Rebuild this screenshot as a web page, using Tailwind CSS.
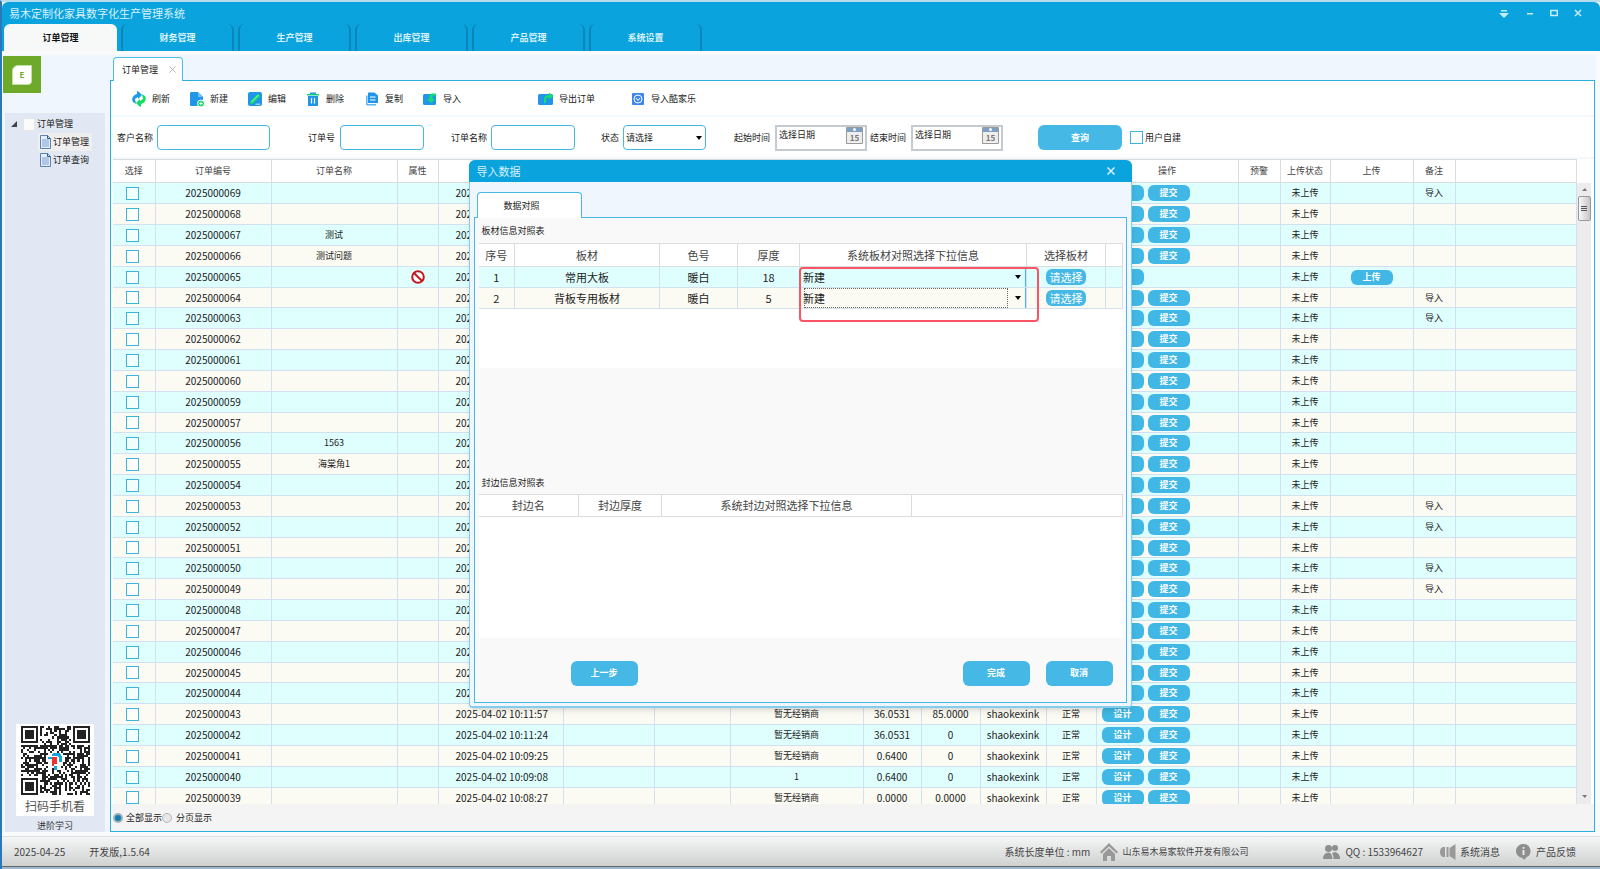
<!DOCTYPE html>
<html lang="zh-CN">
<head>
    <meta charset="UTF-8">
    <meta name="viewport" content="width=device-width, initial-scale=1.0">
    <title>易木定制化家具数字化生产管理系统</title>
    <script src="https://cdn.jsdelivr.net/npm/@tailwindcss/browser@4"></script>
</head>
<body class="flex h-screen flex-col overflow-hidden border-t-2 border-l-2 border-t-[#b9dcec] border-l-[#2a78b8] bg-[#f9fafb] font-['Noto_Sans_CJK_SC',sans-serif] text-[9px] leading-3 text-[#222]">
    <header class="flex h-[49px] shrink-0 flex-col justify-between rounded-t-md bg-[#0aa3dd] pl-[2px]">
        <div class="flex items-center justify-between pt-[3px] pr-[18px]">
            <h1 class="pl-[5px] text-[11px] leading-4 text-[#d9f1fb]">易木定制化家具数字化生产管理系统</h1>
            <div class="flex items-center gap-4 text-[#c8ebf8]">
                <button aria-label="菜单"><svg class="h-3 w-3" viewBox="0 0 12 12" fill="currentColor"><path d="M3 3h6v1.500H3zM1 6h10L6 11z"/></svg></button>
                <button aria-label="最小化"><svg class="h-2 w-2" viewBox="0 0 8 8" fill="currentColor"><path d="M1 4h6v1.500H1z"/></svg></button>
                <button aria-label="最大化"><svg class="h-2 w-2" viewBox="0 0 8 8" fill="none" stroke="currentColor" stroke-width="1.500"><path d="M.8 1.500h6.500v5H.8z"/></svg></button>
                <button aria-label="关闭"><svg class="h-2 w-2" viewBox="0 0 8 8" fill="none" stroke="currentColor" stroke-width="1.500"><path d="M1 1l6 6M7 1L1 7"/></svg></button>
            </div>
        </div>
        <nav class="flex gap-1 text-center font-bold leading-[27px] text-[#d9f1fb]">
            <a href="#" class="h-[27px] w-[113px] rounded-t-md bg-[#f7f9f9] text-[#111]">订单管理</a>
            <a href="#" class="h-[27px] w-[113px] rounded-t-md border-x-2 border-[#0b86b8]">财务管理</a>
            <a href="#" class="h-[27px] w-[113px] rounded-t-md border-x-2 border-[#0b86b8]">生产管理</a>
            <a href="#" class="h-[27px] w-[113px] rounded-t-md border-x-2 border-[#0b86b8]">出库管理</a>
            <a href="#" class="h-[27px] w-[113px] rounded-t-md border-x-2 border-[#0b86b8]">产品管理</a>
            <a href="#" class="h-[27px] w-[113px] rounded-t-md border-x-2 border-[#0b86b8]">系统设置</a>
        </nav>
    </header>

    <div class="mt-1 mr-1 mb-1 flex min-h-0 flex-1 bg-[#eff6fe]">
        <aside class="flex w-[108px] shrink-0 flex-col pr-[5px]">
            <div class="mt-px ml-px flex h-[37px] w-[38px] shrink-0 items-center justify-center bg-[#6fa929]">
                <div class="flex h-5 w-5 items-center justify-center rounded-tl-md rounded-br-sm border border-[#c4dfa3] bg-white text-[8px] font-bold text-[#6fa929]">E</div>
            </div>
            <div class="mt-5 ml-[3px] flex flex-1 flex-col bg-[#e1e8f3] pt-[2px]">
                <div class="flex h-[18px] items-center pl-[6px]">
                    <svg class="h-[6px] w-[6px]" viewBox="0 0 6 6"><path d="M6 0v6H0z" fill="#444"/></svg>
                    <svg class="ml-[6px] mr-px h-[13px] w-[13px]" viewBox="0 0 13 13"><path d="M2 .5h9.500v12H.5V2z" fill="#fbfbfb" stroke="#e5e5e5"/></svg>
                    <span>订单管理</span>
                </div>
                <a href="#" class="ml-[33px] flex h-[18px] w-[54px] items-center gap-[2px] bg-[#efefef] pl-[2px]">
                    <svg class="h-[14px] w-[11px]" viewBox="0 0 11 14"><path d="M.5.500h7l3 3v10H.5z" fill="#e4eefa" stroke="#5e83ad"/><path d="M7.500.500v3h3" fill="none" stroke="#2f5c8f"/><path d="M2 5h7M2 7h7M2 9h7M2 11h7" stroke="#7aa0d0"/></svg>
                    <span>订单管理</span>
                </a>
                <a href="#" class="ml-[33px] flex h-[18px] w-[54px] items-center gap-[2px] pl-[2px]">
                    <svg class="h-[14px] w-[11px]" viewBox="0 0 11 14"><path d="M.5.500h7l3 3v10H.5z" fill="#e4eefa" stroke="#5e83ad"/><path d="M7.500.500v3h3" fill="none" stroke="#2f5c8f"/><path d="M2 5h7M2 7h7M2 9h7M2 11h7" stroke="#7aa0d0"/></svg>
                    <span>订单查询</span>
                </a>
                <div class="mt-auto flex flex-col items-center text-[#333]">
                    <div class="w-[78px] bg-white pt-[2px] text-center">
                        <svg id="qr" class="mx-auto h-[69px] w-[69px]" viewBox="0 0 33 33" shape-rendering="crispEdges"></svg>
                        <div class="pt-px text-[12px] leading-5 text-[#555]">扫码手机看</div>
                    </div>
                    <a href="#" class="pt-1">进阶学习</a>
                </div>
            </div>
        </aside>

        <main class="flex min-w-0 flex-1 flex-col pt-[2px] pr-px">
            <div class="z-10 -mb-px ml-[3px] flex h-6 w-[70px] shrink-0 items-center justify-between rounded-t-sm border border-b-0 border-[#4fbfe8] bg-white pl-2 pr-[6px]">
                <span>订单管理</span>
                <button aria-label="关闭标签"><svg class="h-[7px] w-[7px]" viewBox="0 0 7 7" stroke="#b5b5b5"><path d="M.5.500l6 6M6.500.500l-6 6"/></svg></button>
            </div>
            <div class="flex min-h-0 flex-1 flex-col border border-[#2bb0e0] bg-white">
                <div class="flex h-9 shrink-0 items-center border-b-2 border-[#f3f8fd] pt-px pl-5">
                    <button class="flex w-[58px] items-center gap-[5px]">
                        <svg class="h-4 w-4" viewBox="0 0 16 16"><path d="M8 1L6 0v3C2 4 0 8 2 11l3 2-1-5 3-2v2l4-4z" fill="#1b9be8"/><path d="M8 15l2 1v-3c4-1 6-5 4-8l-3-2 1 5-3 2V8l-4 4z" fill="#12dd62"/></svg>刷新
                    </button>
                    <button class="flex w-[58px] items-center gap-[5px]">
                        <svg class="h-4 w-4" viewBox="0 0 16 16"><path d="M2 1h7l5 5v9H2a1.500 1.500 0 0 1-1-1V2z" fill="#2196e8"/><path d="M9 1l5 5H9z" fill="#6cc0f7"/><circle cx="12" cy="12.500" r="3.500" fill="#13d765" stroke="#fff"/><path d="M12 10.800v3.400M10.300 12.500h3.400" stroke="#fff"/></svg>新建
                    </button>
                    <button class="flex w-[58px] items-center gap-[5px]">
                        <svg class="h-4 w-4" viewBox="0 0 16 16"><rect x="1" y="1" width="14" height="14" rx="2" fill="#2196e8"/><path d="M3 13.500l.8-3.500L11 2.800l2.200 2.200L6 12.500z" fill="#12e06a"/><path d="M4.500 11L11.500 4" stroke="#d8ffe8" stroke-width=".7"/><path d="M8.500 13.200h4.500" stroke="#fff" stroke-width=".8"/></svg>编辑
                    </button>
                    <button class="flex w-[59px] items-center gap-[5px]">
                        <svg class="h-4 w-4" viewBox="0 0 16 16"><path d="M3 5h10v10H3z" fill="#2196e8"/><path d="M5 1.500h6V3H5z" fill="#2196e8"/><path d="M2 3h12v1.500H2z" fill="#12cf80"/><path d="M6.500 7v5.500M9.500 7v5.500" stroke="#fff" stroke-width="1.200"/></svg>删除
                    </button>
                    <button class="flex w-[58px] items-center gap-[5px]">
                        <svg class="h-4 w-4" viewBox="0 0 16 16"><path d="M4 1.500h6.500L14 4.500V12H4z" fill="#2196e8"/><path d="M2 4.500h1.500V13H12v1.500H3l-1-1z" fill="#5cb4f2"/><path d="M6 6h5.500M6 9h5.500" stroke="#fff" stroke-width="1.200"/></svg>复制
                    </button>
                    <button class="flex w-[116px] items-center gap-[5px]">
                        <svg class="h-4 w-4" viewBox="0 0 16 16"><rect x="1" y="3" width="13" height="11" rx="1.500" fill="#2196e8"/><path d="M14 2.500H9.500Q7.500 3 7.500 5v3H5l4.200 4L13 8h-2.500V5.800Q10.500 4.200 14 4.500z" fill="#12e06a"/></svg>导入
                    </button>
                    <button class="flex w-[92px] items-center gap-[5px]">
                        <svg class="h-4 w-4" viewBox="0 0 16 16"><rect x="0" y="3" width="15" height="11" rx="1.500" fill="#2196e8"/><path d="M6 12V8q0-4 5-4V1.500L15.500 5 11 8.500V6.300Q8 6 8 9v3z" fill="#12e06a"/></svg>导出订单
                    </button>
                    <button class="flex items-center gap-[5px]">
                        <svg class="h-4 w-4" viewBox="0 0 16 16"><rect x="2" y="2" width="12" height="12" rx="1" fill="#3f86f5"/><circle cx="8" cy="8" r="4" fill="none" stroke="#fff"/><path d="M6 7l2 2.500L10 7" fill="none" stroke="#fff"/></svg>导入酷家乐
                    </button>
                </div>

                <form class="flex h-[42px] shrink-0 items-center border-b-2 border-[#f3f8fd] pt-px pl-[6px]">
                    <label for="customer" class="w-10">客户名称</label>
                    <input id="customer" class="h-[25px] w-[113px] rounded-sm border border-[#45b8e2] px-1">
                    <label for="orderNo" class="ml-[38px] w-8">订单号</label>
                    <input id="orderNo" class="h-[25px] w-[84px] rounded-sm border border-[#45b8e2] px-1">
                    <label for="orderName" class="ml-[27px] w-10">订单名称</label>
                    <input id="orderName" class="h-[25px] w-[84px] rounded-sm border border-[#45b8e2] px-1">
                    <label for="status" class="ml-[26px] w-[22px]">状态</label>
                    <div class="relative">
                        <select id="status" class="h-[25px] w-[83px] appearance-none rounded-sm border border-[#45b8e2] pl-[2px]"><option>请选择</option></select>
                        <svg class="pointer-events-none absolute top-[11px] right-1 h-1 w-[6px]" viewBox="0 0 6 4"><path d="M0 0h6L3 4z"/></svg>
                    </div>
                    <label for="dateFrom" class="ml-7 w-[41px]">起始时间</label>
                    <div class="relative">
                        <input id="dateFrom" value="选择日期" class="h-[26px] w-[92px] border-2 border-[#c3cad2] px-[2px] pb-[6px]">
                        <svg class="absolute top-[2px] right-1 h-[17px] w-[17px]" viewBox="0 0 17 17"><path d="M.5.500h16v16H.5z" fill="#eee" stroke="#9a9a9a"/><path d="M1 1h15v4H1z" fill="#7d9fc4"/><circle cx="8.500" cy="2.500" r="1.500" fill="#fff"/><text x="8.500" y="14" text-anchor="middle" font-size="8" font-weight="bold" fill="#777">15</text></svg>
                    </div>
                    <label for="dateTo" class="ml-[3px] w-[41px]">结束时间</label>
                    <div class="relative">
                        <input id="dateTo" value="选择日期" class="h-[26px] w-[92px] border-2 border-[#c3cad2] px-[2px] pb-[6px]">
                        <svg class="absolute top-[2px] right-1 h-[17px] w-[17px]" viewBox="0 0 17 17"><path d="M.5.500h16v16H.5z" fill="#eee" stroke="#9a9a9a"/><path d="M1 1h15v4H1z" fill="#7d9fc4"/><circle cx="8.500" cy="2.500" r="1.500" fill="#fff"/><text x="8.500" y="14" text-anchor="middle" font-size="8" font-weight="bold" fill="#777">15</text></svg>
                    </div>
                    <button type="button" class="ml-[35px] h-[25px] w-[84px] rounded-md bg-[#45b8e5] font-bold text-white">查询</button>
                    <label class="ml-2 flex items-center gap-[2px]"><input type="checkbox" class="h-[13px] w-[13px] appearance-none border border-[#3bb4e0] bg-white checked:bg-[#3bb4e0]">用户自建</label>
                </form>

                <div class="flex min-h-0 flex-1 overflow-hidden pl-[2px] pr-[3px]">
                    <div class="min-w-0 flex-1 overflow-hidden">
                        <table class="w-full table-fixed border-collapse text-center">
                            <colgroup>
                                <col class="w-[42px]"><col class="w-[116px]"><col class="w-[126px]"><col class="w-[41px]"><col class="w-[125px]"><col class="w-[91px]"><col class="w-[76px]"><col class="w-[133px]"><col class="w-[58px]"><col class="w-[59px]"><col class="w-[66px]"><col class="w-[50px]"><col class="w-[142px]"><col class="w-[42px]"><col class="w-[50px]"><col class="w-[83px]"><col class="w-[42px]"><col>
                            </colgroup>
                            <thead>
                                <tr class="h-[23px] border-y border-[#dcdcdc] bg-white text-[#444] *:border-r *:border-[#dcdcdc] *:p-0 *:font-normal">
                                    <th>选择</th><th>订单编号</th><th>订单名称</th><th>属性</th><th></th><th></th><th></th><th></th><th></th><th></th><th></th><th></th><th>操作</th><th>预警</th><th>上传状态</th><th>上传</th><th>备注</th><th></th>
                                </tr>
                            </thead>
                            <tbody id="orderRows"></tbody>
                        </table>
                    </div>
                    <div class="mt-6 flex w-[14px] shrink-0 flex-col items-center bg-[#ececec]">
                        <svg class="my-[5px] h-[3px] w-[5px] shrink-0" viewBox="0 0 5 3"><path d="M0 3h5L3 0z" fill="#777"/></svg>
                        <div class="flex h-[25px] w-[13px] shrink-0 flex-col items-center justify-center gap-px rounded-xs border border-[#999] bg-linear-to-r from-[#f8f8f8] to-[#c6c6c6]">
                            <span class="h-px w-[6px] bg-[#555]"></span><span class="h-px w-[6px] bg-[#555]"></span><span class="h-px w-[6px] bg-[#555]"></span>
                        </div>
                        <svg class="mt-auto mb-[6px] h-[3px] w-[5px] shrink-0" viewBox="0 0 5 3"><path d="M0 0h5L3 3z" fill="#777"/></svg>
                    </div>
                </div>

                <div class="flex h-[27px] shrink-0 items-center bg-[#f4f4f4] pl-[2px]">
                    <label class="flex items-center gap-[3px]"><input type="radio" name="paging" checked class="h-[10px] w-[10px] appearance-none rounded-full border border-[#8a9299] bg-white checked:border-2 checked:border-[#9fb0b8] checked:bg-[#137bb0]">全部显示</label>
                    <label class="flex items-center gap-1"><input type="radio" name="paging" class="h-[10px] w-[10px] appearance-none rounded-full border border-[#b5b5b5] bg-[#e8e8e8] checked:border-2 checked:border-[#9fb0b8] checked:bg-[#137bb0]">分页显示</label>
                </div>
            </div>
        </main>
    </div>

    <footer class="flex h-[30px] shrink-0 items-center border-t border-[#e0e0e0] bg-linear-to-b from-[#f5f6f6] to-[#cfd1d1] pr-6 pl-3 text-[10px] text-[#444]">
        <span>2025-04-25</span>
        <span class="ml-6">开发版,1.5.64</span>
        <span class="ml-auto">系统长度单位 : mm</span>
        <a href="#" class="ml-[10px] flex items-center gap-1 text-[9px]">
            <svg class="h-[18px] w-[18px]" viewBox="0 0 18 18" fill="#999"><path d="M9 0l9 9-1.500 1.500L9 3.500l-7.500 7L0 9z"/><path d="M9 5l6 6v7h-4v-5H7v5H3v-7z"/></svg>山东易木易家软件开发有限公司
        </a>
        <span class="ml-[75px] flex items-center gap-[5px]">
            <svg class="h-4 w-[17px]" viewBox="0 0 17 16" fill="#8e8e8e"><circle cx="5.500" cy="4.500" r="3.500"/><path d="M0 15q0-6 5.500-6.500Q9 9 9.500 15z"/><circle cx="12" cy="4" r="3"/><path d="M10.500 15q0-4-1.500-6l3-1q4.500 1 5 6v1z"/></svg>QQ : 1533964627
        </span>
        <a href="#" class="ml-[17px] flex items-center gap-1">
            <svg class="h-4 w-4" viewBox="0 0 16 16" fill="#999"><path d="M3 3h2v10H3Q0 12 0 8t3-5zM6.500 3h2v10h-2zM9.500 4L15.500 0v16L9.500 12z"/></svg>系统消息
        </a>
        <a href="#" class="ml-4 flex items-center gap-[5px]">
            <svg class="h-4 w-[15px]" viewBox="0 0 15 16"><path d="M7.500 0a7 7 0 0 1 3 13.300L8 16l-1.500-2A7 7 0 0 1 7.500 0z" fill="#8e8e8e"/><path d="M7.500 3v1.800M7.500 6v5" stroke="#eee" stroke-width="1.800"/></svg>产品反馈
        </a>
    </footer>
    <div class="h-[3px] shrink-0 border-t border-[#666] bg-[#9db8cf]"></div>

    <div class="pointer-events-none fixed inset-0 z-20 flex items-center justify-center pb-[2px]">
        <section role="dialog" aria-label="导入数据" class="pointer-events-auto flex w-[663px] flex-col rounded-t-md rounded-b-sm border-x border-b-2 border-[#85cdea] bg-[#eff6fe] shadow-md">
            <div class="-mx-px flex h-[22px] items-center justify-between rounded-t-md bg-[#0aa3dd] pr-[17px] pl-2 text-[11px] text-[#d9f1fb]">
                <h2>导入数据</h2>
                <button aria-label="关闭对话框"><svg class="h-2 w-2" viewBox="0 0 8 8" stroke="currentColor" stroke-width="1.500"><path d="M.5.500l7 7M7.500.500l-7 7"/></svg></button>
            </div>
            <div class="z-10 mt-[10px] -mb-px ml-[7px] flex h-[26px] w-[105px] items-center rounded-t-sm border border-b-0 border-[#45b8e5] bg-white pt-px pl-[26px]">数据对照</div>
            <div class="mx-1 mb-[3px] border border-[#45b8e5] bg-[#f9f9f9] pr-[3px] pb-4 pl-1">
                <h3 class="flex h-[25px] items-center pt-[2px] pl-[3px]">板材信息对照表</h3>
                <div class="relative h-[125px] bg-white text-[11px]">
                    <table class="w-full table-fixed border-collapse text-center">
                        <colgroup><col class="w-[36px]"><col class="w-[145px]"><col class="w-[78px]"><col class="w-[62px]"><col class="w-[227px]"><col class="w-[79px]"><col></colgroup>
                        <thead>
                            <tr class="h-[23px] border-y border-[#dcdcdc] text-[#444] *:border-r *:border-[#dcdcdc] *:p-0 *:font-normal">
                                <th>序号</th><th>板材</th><th>色号</th><th>厚度</th><th>系统板材对照选择下拉信息</th><th>选择板材</th><th></th>
                            </tr>
                        </thead>
                        <tbody>
                            <tr class="h-[21px] border-b border-[#d3e0f0] bg-[#dfffff] *:border-r *:border-[#d3e0f0] *:p-0">
                                <td>1</td><td>常用大板</td><td>暖白</td><td>18</td>
                                <td><div class="relative"><select aria-label="板材1对照" class="block h-5 w-full appearance-none border-r border-[#45b8e5] pl-[3px]"><option>新建</option></select><svg class="pointer-events-none absolute top-2 right-[5px] h-1 w-[6px]" viewBox="0 0 6 4"><path d="M0 0h6L3 4z"/></svg></div></td>
                                <td><button class="h-4 w-10 rounded-md bg-[#45b8e5] leading-4 text-white">请选择</button></td><td></td>
                            </tr>
                            <tr class="h-[21px] border-b border-[#d3e0f0] bg-[#fbfaf3] *:border-r *:border-[#d3e0f0] *:p-0">
                                <td>2</td><td>背板专用板材</td><td>暖白</td><td>5</td>
                                <td><div class="relative"><select aria-label="板材2对照" class="block h-5 w-full appearance-none border-r border-[#45b8e5] pl-[3px]"><option>新建</option></select><span class="pointer-events-none absolute inset-y-0 left-1 right-[18px] border border-dotted border-[#666]"></span><svg class="pointer-events-none absolute top-2 right-[5px] h-1 w-[6px]" viewBox="0 0 6 4"><path d="M0 0h6L3 4z"/></svg></div></td>
                                <td><button class="h-4 w-10 rounded-md bg-[#45b8e5] leading-4 text-white">请选择</button></td><td></td>
                            </tr>
                        </tbody>
                    </table>
                    <!-- 需要用户确认的对照列 -->
                    <div class="pointer-events-none absolute top-6 left-[320px] h-[55px] w-[240px] rounded-sm border-2 border-[#fb5565]"></div>
                </div>
                <h3 class="mt-[105px] flex h-[21px] items-center pl-[3px]">封边信息对照表</h3>
                <div class="h-[144px] bg-white text-[11px]">
                    <table class="w-full table-fixed border-collapse text-center">
                        <colgroup><col class="w-[100px]"><col class="w-[83px]"><col class="w-[250px]"><col></colgroup>
                        <thead>
                            <tr class="h-[22px] border-y border-[#dcdcdc] text-[#444] *:border-r *:border-[#dcdcdc] *:p-0 *:font-normal">
                                <th>封边名</th><th>封边厚度</th><th>系统封边对照选择下拉信息</th><th></th>
                            </tr>
                        </thead>
                    </table>
                </div>
                <div class="mt-[23px] flex items-center pr-[10px] pl-[92px] font-bold text-white">
                    <button class="h-[25px] w-[67px] rounded-md bg-[#45b8e5]">上一步</button>
                    <button class="ml-auto h-[25px] w-[67px] rounded-md bg-[#45b8e5]">完成</button>
                    <button class="ml-4 h-[25px] w-[67px] rounded-md bg-[#45b8e5]">取消</button>
                </div>
            </div>
        </section>
    </div>

    <script>
        const orderNos = [69, 68, 67, 66, 65, 64, 63, 62, 61, 60, 59, 57, 56, 55, 54, 53, 52, 51, 50, 49, 48, 47, 46, 45, 44, 43, 42, 41, 40, 39];
        const names = { 67: '测试', 66: '测试问题', 56: '1563', 55: '海棠角1' };
        const imported = [69, 64, 63, 53, 52, 50, 49];
        const details = {
            43: ['2025-04-02 10:11:57', '暂无经销商', '36.0531', '85.0000', 'shaokexink', '正常'],
            42: ['2025-04-02 10:11:24', '暂无经销商', '36.0531', '0', 'shaokexink', '正常'],
            41: ['2025-04-02 10:09:25', '暂无经销商', '0.6400', '0', 'shaokexink', '正常'],
            40: ['2025-04-02 10:09:08', '1', '0.6400', '0', 'shaokexink', '正常'],
            39: ['2025-04-02 10:08:27', '暂无经销商', '0.0000', '0.0000', 'shaokexink', '正常']
        };
        const forbidden = '<svg class="mx-auto h-[14px] w-[14px]" viewBox="0 0 14 14" fill="none" stroke="#c4161c" stroke-width="2"><circle cx="7" cy="7" r="5.800" fill="#fff"/><path d="M3 3l8 8"/></svg>';

        function renderOrders() {
            document.getElementById('orderRows').innerHTML = orderNos.map(no => {
                const [time, dealer, area, amount, user, state] = details[no] || ['2025', '', '', '', '', ''];
                const locked = no === 65;
                return `<tr class="h-[21px] border-b border-[#d3e0f0] odd:bg-[#dfffff] even:bg-[#fbfaf3] nth-[6n]:h-[20px] *:border-r *:border-[#d3e0f0] *:p-0">
                    <td><input type="checkbox" aria-label="选择订单20250000${no}" class="ml-[13px] block h-[13px] w-[13px] appearance-none border border-[#3bb4e0] bg-white/60 checked:bg-[#3bb4e0]"></td>
                    <td class="text-[10px]">20250000${no}</td>
                    <td>${names[no] || ''}</td>
                    <td>${locked ? forbidden : ''}</td>
                    <td class="text-left text-[10px] whitespace-nowrap"><span class="pl-[17px]">${time}</span></td>
                    <td></td><td></td>
                    <td>${dealer}</td>
                    <td class="text-[10px]">${area}</td>
                    <td class="text-[10px]">${amount}</td>
                    <td class="text-[10px]">${user}</td>
                    <td>${state}</td>
                    <td><div class="flex gap-1 pl-[5px] font-bold text-white"><button class="h-4 w-[42px] rounded-md bg-[#40b7e4]">${details[no] ? '设计' : ''}</button>${locked ? '' : '<button class="h-4 w-[42px] rounded-md bg-[#40b7e4]">提交</button>'}</div></td>
                    <td></td>
                    <td>未上传</td>
                    <td>${locked ? '<button class="block mx-auto h-[15px] w-[42px] rounded-md bg-[#40b7e4] font-bold text-white">上传</button>' : ''}</td>
                    <td>${imported.includes(no) ? '导入' : ''}</td>
                    <td></td>
                </tr>`;
            }).join('');
        }

        function renderQr() {
            let seed = 20250425, d = '';
            const n = 33;
            const corner = (x, y) => (x < 9 && y < 9) || (x > n - 10 && y < 9) || (x < 9 && y > n - 10);
            for (let y = 0; y < n; y++) {
                for (let x = 0; x < n; x++) {
                    seed = (seed * 1103515245 + 12345) % 2147483648;
                    const center = Math.hypot(x - 16, y - 16) < 4;
                    if (seed / 2147483648 > 0.45 && !corner(x, y) && !center) d += `M${x} ${y}h1v1h-1z`;
                }
            }
            [[0, 0], [n - 8, 0], [0, n - 8]].forEach(([x, y]) => {
                d += `M${x} ${y}h8v8h-8zM${x + 1} ${y + 1}v6h6v-6zM${x + 2} ${y + 2}h4v4h-4z`;
            });
            document.getElementById('qr').innerHTML = `<path d="${d}" fill="#222"/>
                <path d="M15 14q4-2 4 3" stroke="#1ba5dd" stroke-width="1.500" fill="none"/><path d="M13 15h2v1h-2zM16 19h1v2h-1z" fill="#1ba5dd"/><path d="M15 15h2v3h-1v1h-1z" fill="#e33"/>`;
        }

        renderOrders();
        renderQr();
    </script>
</body>
</html>
